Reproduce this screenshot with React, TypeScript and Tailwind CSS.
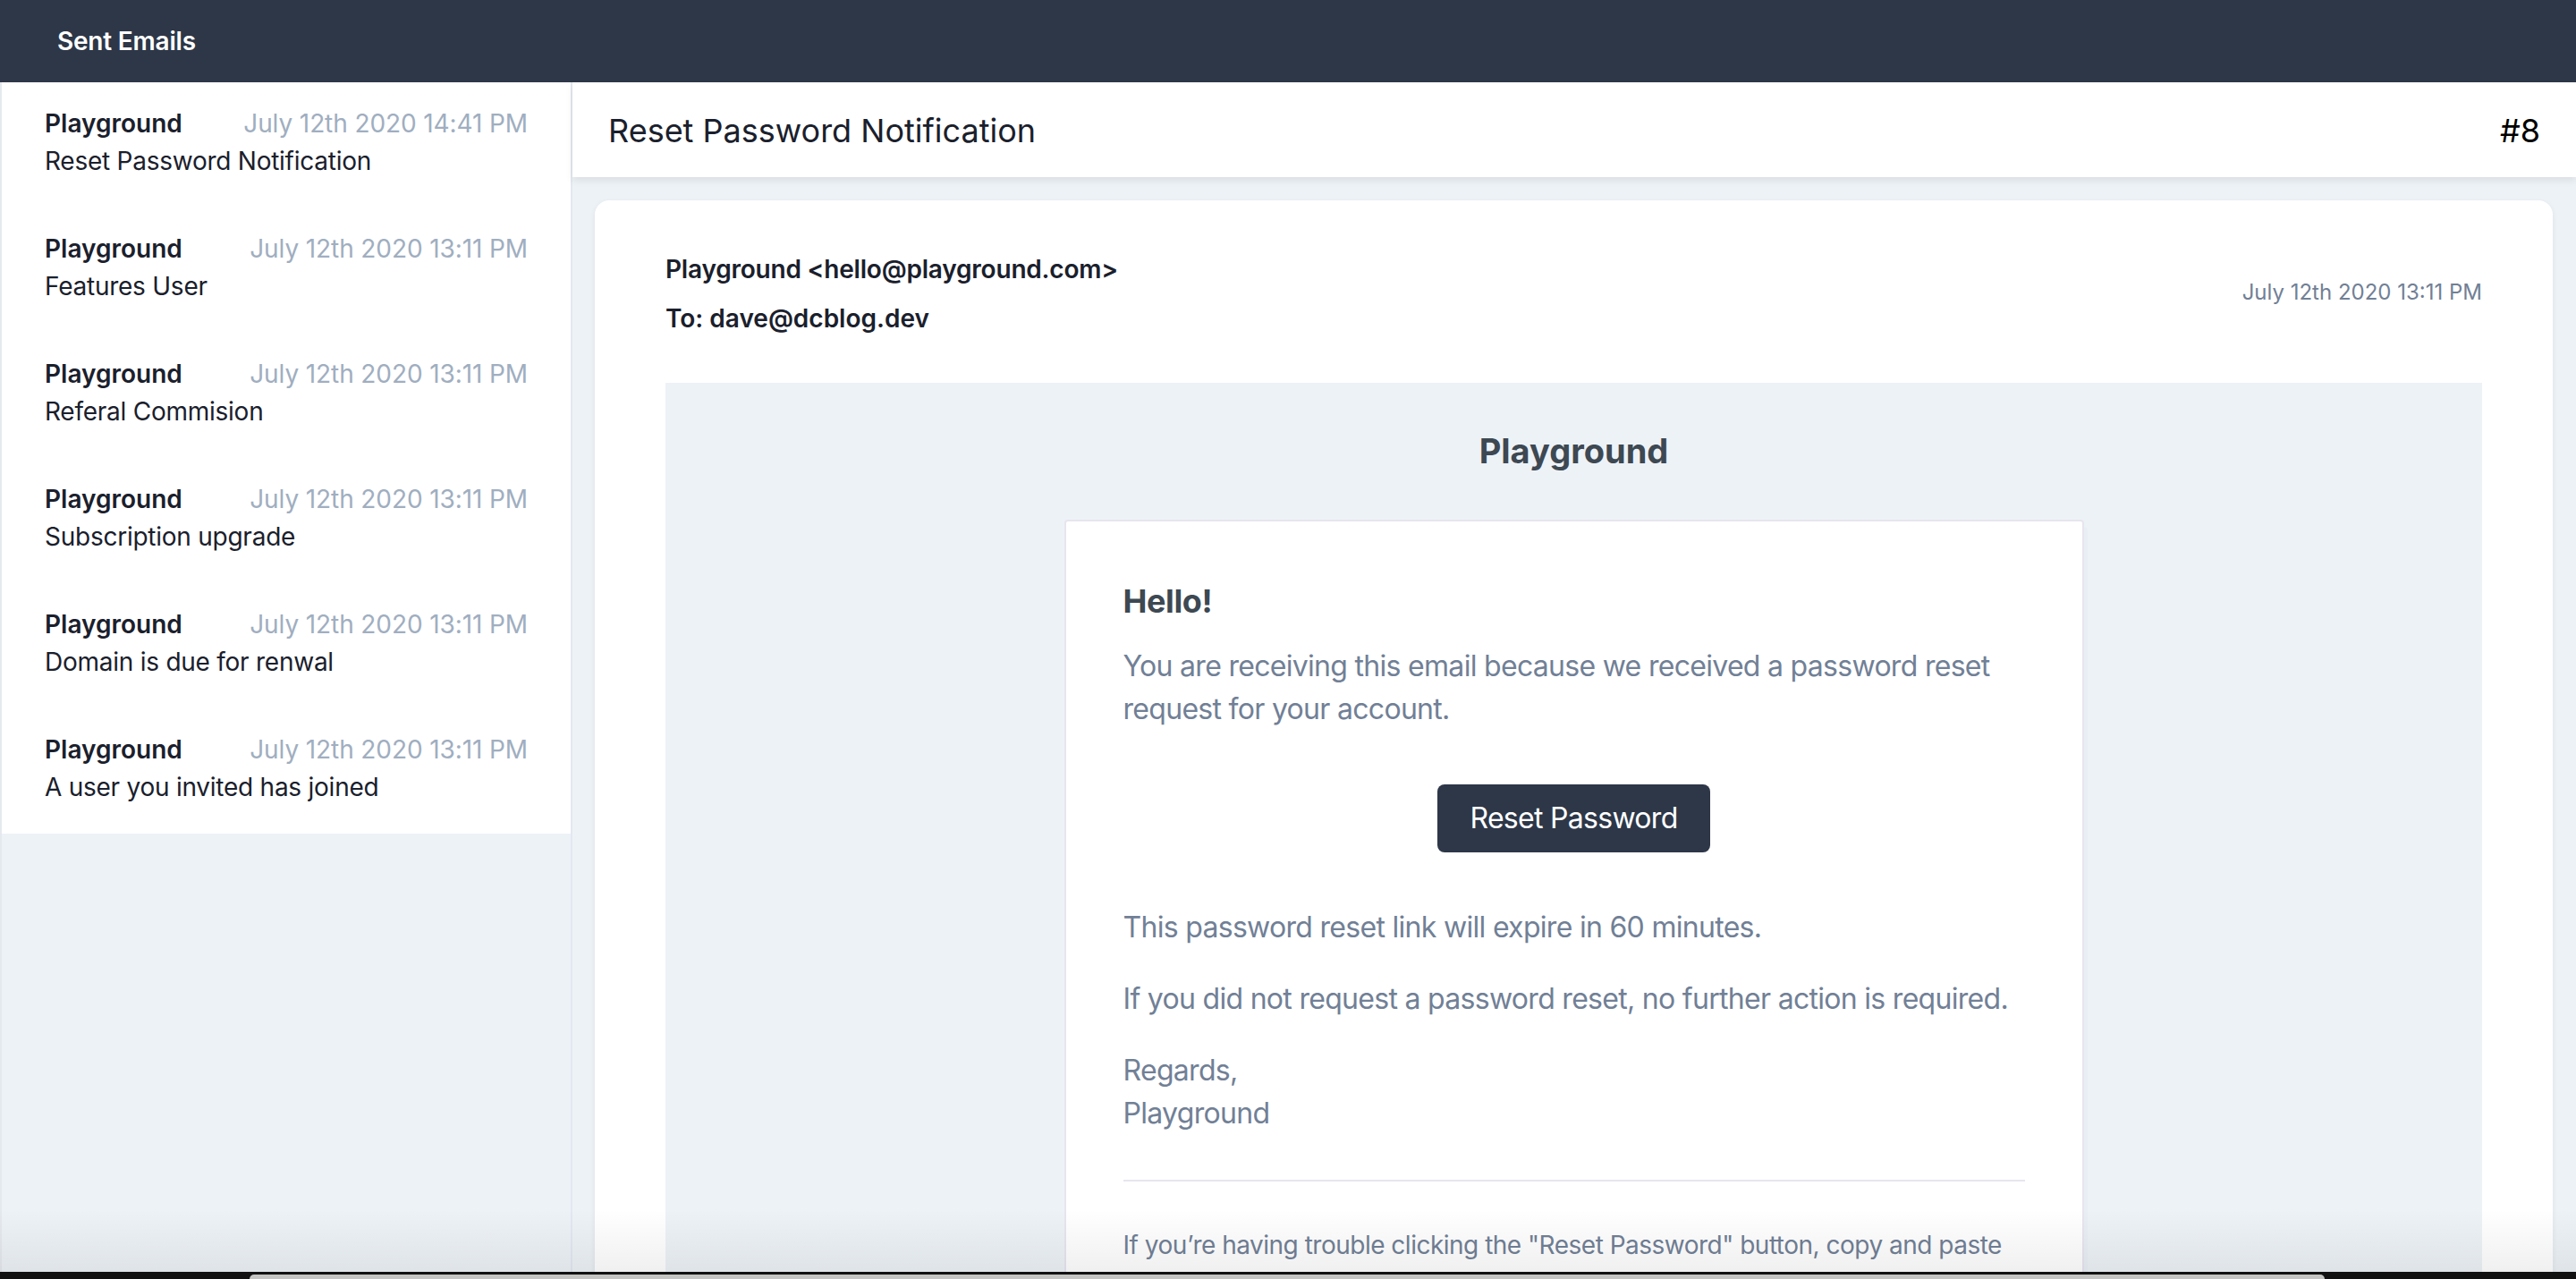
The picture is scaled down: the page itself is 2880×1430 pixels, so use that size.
import React from "react";

const emails = [
  { from: "Playground", date: "July 12th 2020 14:41 PM", subject: "Reset Password Notification" },
  { from: "Playground", date: "July 12th 2020 13:11 PM", subject: "Features User" },
  { from: "Playground", date: "July 12th 2020 13:11 PM", subject: "Referal Commision" },
  { from: "Playground", date: "July 12th 2020 13:11 PM", subject: "Subscription upgrade" },
  { from: "Playground", date: "July 12th 2020 13:11 PM", subject: "Domain is due for renwal" },
  { from: "Playground", date: "July 12th 2020 13:11 PM", subject: "A user you invited has joined" },
];

const EmailBody = () => (
  <div className="mt-[51px] bg-[#edf2f7] pb-[80px]">
    {/* mail header */}
    <div className="py-[50px] text-center text-[38px] leading-[53px] font-bold text-[#3d4852]">Playground</div>

    {/* inner body */}
    <div className="mx-auto w-[1140px] bg-white border-2 border-[#e8e5ef] rounded-[4px] shadow-[0_4px_0_rgba(0,0,150,0.025),4px_8px_0_rgba(0,0,150,0.015)]">
      <div className="p-[64px] text-[#718096] text-[32px] leading-[48px] tracking-[-0.7px]">
        <h1 className="text-[36px] leading-[50px] font-bold text-[#3d4852] mb-[24px] tracking-[-0.4px]">Hello!</h1>
        <p className="mb-[32px]">You are receiving this email because we received a password reset request for your account.</p>

        <div className="my-[60px] flex justify-center">
          <a className="inline-block rounded-[8px] bg-[#2d3748] px-[36px] py-[16px] text-white text-[32px] leading-[44px]">
            Reset Password
          </a>
        </div>

        <p className="mb-[32px]">This password reset link will expire in 60 minutes.</p>
        <p className="mb-[32px]">If you did not request a password reset, no further action is required.</p>
        <p>
          Regards,
          <br />
          Playground
        </p>

        <div className="mt-[50px] border-t-2 border-[#e8e5ef] pt-[50px]">
          <p className="text-[28px] leading-[42px] tracking-[-0.5px]">
            If you’re having trouble clicking the "Reset Password" button, copy and paste the URL below into your web
            browser: http://playground.test/password/reset/8f2c1b7a9d</p>
        </div>
      </div>
    </div>

    <div className="py-[64px] text-center text-[24px] text-[#b0adc5]">© 2020 Playground. All rights reserved.</div>
  </div>
);

export default function App() {
  return (
    <div className="relative h-[1430px] overflow-hidden bg-[#edf2f7] font-['Inter',sans-serif] flex flex-col">
      {/* top bar */}
      <nav className="h-[92px] shrink-0 bg-[#2d3748] px-[64px] flex items-center text-white text-[28px] font-semibold tracking-[-0.2px]">
        Sent Emails
      </nav>

      <div className="flex flex-1 min-h-0">
        {/* sidebar list */}
        <aside className="w-[640px] shrink-0 border-r-2 border-[#e2e8f0] border-l-2 border-l-[#e5e9ef]">
          <div className="bg-white">
            {emails.map((e, i) => (
              <div key={i} className="pl-[48px] pr-[48px] pt-[25px] pb-[31px] text-[28px] leading-[42px] text-[#1a202c]">
                <div className="flex justify-between">
                  <span className="font-semibold">{e.from}</span>
                  <span className="text-[#a0aec0] tracking-[-0.1px]">{e.date}</span>
                </div>
                <div className="tracking-[-0.25px]">{e.subject}</div>
              </div>
            ))}
          </div>
        </aside>

        {/* email view */}
        <main className="flex-1 min-w-0 flex flex-col">
          <header className="relative z-10 h-[106px] shrink-0 bg-white shadow-[0_4px_8px_rgba(0,0,0,0.08)] px-[40px] flex items-center justify-between text-[36px]">
            <span className="text-[#1a202c] mt-[2px]">Reset Password Notification</span>
            <span className="text-black mt-[2px]">#8</span>
          </header>

          <div className="pt-[26px] pl-[25px] pr-[26px]">
            <div className="bg-white rounded-t-[16px] shadow-[0_2px_6px_rgba(0,0,0,0.07)] px-[79px] pt-[56px]">
              <div className="flex items-center justify-between">
                <div className="text-[28px] leading-[42px] font-semibold text-[#1a202c]">
                  <div className="tracking-[-0.2px]">Playground &lt;hello@playground.com&gt;</div>
                  <div className="mt-[13px]">To: dave@dcblog.dev</div>
                </div>
                <div className="text-[24px] text-[#718096] -mt-[4px]">July 12th 2020 13:11 PM</div>
              </div>
              <EmailBody />
            </div>
          </div>
        </main>
      </div>

      {/* screen capture edge: dock shadow and window bottom */}
      <div className="pointer-events-none absolute inset-x-0 bottom-[8px] h-[70px] bg-gradient-to-b from-transparent to-black/[0.06]" />
      <div className="pointer-events-none absolute inset-x-0 bottom-0 h-[8px] bg-[#111] flex">
        <div className="ml-[279px] mt-[3px] w-[2320px] rounded-t-[6px] bg-[#c4c4c2]" />
      </div>
    </div>
  );
}
